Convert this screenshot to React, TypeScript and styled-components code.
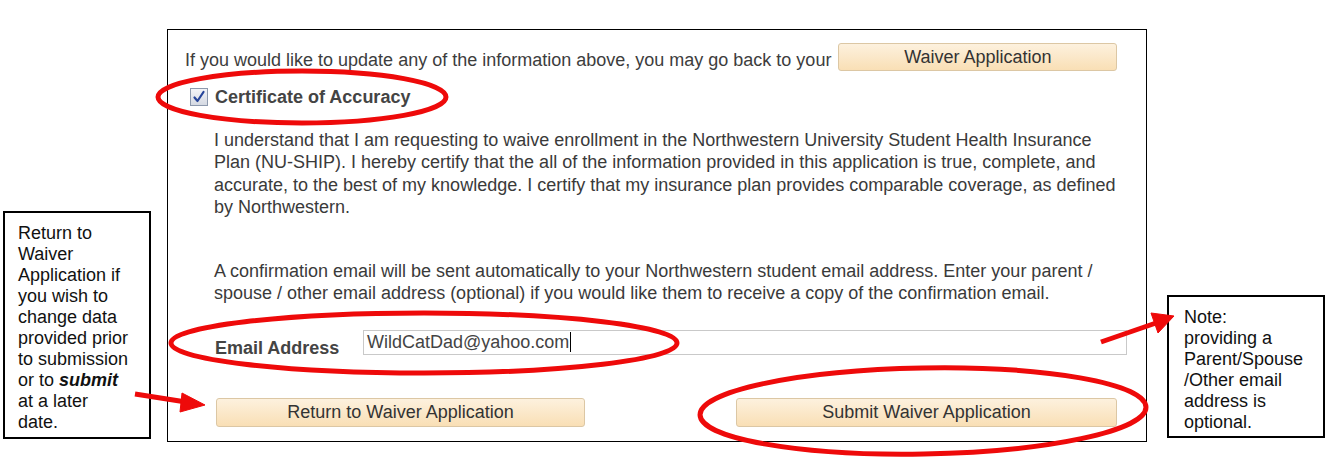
import React from "react";
import styled, { createGlobalStyle } from "styled-components";

const GlobalStyle = createGlobalStyle`
    html, body {
        margin: 0;
        padding: 0;
        background: #ffffff;
    }
    body {
        font-family: "Liberation Sans", Arial, sans-serif;
    }
`;

export default function App() {
    return (
        <>
            <GlobalStyle />
            <Page>
                <Note $top={211} $left={3} $width={148} $height={228} $pad={13}>
                    Return to<br />Waiver<br />Application if<br />you wish to<br />change data<br />
                    provided prior<br />to submission<br />or to <b><i>submit</i></b><br />at a later<br />date.
                </Note>

                <MainBox>
                    <TopRow>
                        <Text>If you would like to update any of the information above, you may go back to your</Text>
                        <Button $width={279} $height={28} $ml={7}>Waiver Application</Button>
                    </TopRow>

                    <CheckRow>
                        <CheckBox>
                            <svg width="14" height="14" viewBox="0 0 14 14">
                                <path d="M2.5 7.5 L5.5 11 L11.5 2" fill="none" stroke="#27459a" strokeWidth="2.2" strokeLinecap="round" strokeLinejoin="round" />
                            </svg>
                        </CheckBox>
                        <Label>Certificate of Accuracy</Label>
                    </CheckRow>

                    <Paragraph $mt={21}>
                        I understand that I am requesting to waive enrollment in the Northwestern University Student Health Insurance
                        Plan (NU-SHIP). I hereby certify that the all of the information provided in this application is true, complete, and
                        accurate, to the best of my knowledge. I certify that my insurance plan provides comparable coverage, as defined
                        by Northwestern.
                    </Paragraph>

                    <Paragraph $mt={42}>
                        A confirmation email will be sent automatically to your Northwestern student email address. Enter your parent /
                        spouse / other email address (optional) if you would like them to receive a copy of the confirmation email.
                    </Paragraph>

                    <EmailRow>
                        <Label $width={148}>Email Address</Label>
                        <Field>
                            WildCatDad@yahoo.com<Caret />
                        </Field>
                    </EmailRow>

                    <ButtonRow>
                        <Button $width={369} $height={29} $ml={31}>Return to Waiver Application</Button>
                        <Button $width={381} $height={29} $ml={151}>Submit Waiver Application</Button>
                    </ButtonRow>
                </MainBox>

                <Note $top={295} $left={20} $width={158} $height={143} $pad={15}>
                    Note:<br />providing a<br />Parent/Spouse<br />/Other email<br />address is<br />optional.
                </Note>

                {/* red marker annotations drawn over the form */}
                <Marks width="1326" height="459" viewBox="0 0 1326 459">
                    <g fill="none" stroke="#ee0a0a" strokeWidth="5">
                        <ellipse cx="302" cy="97" rx="144" ry="26" />
                        <ellipse cx="424" cy="343" rx="253" ry="30" />
                        <ellipse cx="923" cy="411" rx="223" ry="43" transform="rotate(-1 923 411)" />
                    </g>
                    <g fill="#ee0a0a" stroke="#ee0a0a">
                        <line x1="135" y1="394" x2="186" y2="402" strokeWidth="5" />
                        <polygon points="205,405 182,393 180,412" />
                        <line x1="1101" y1="342" x2="1156" y2="323" strokeWidth="5" />
                        <polygon points="1174,316 1151,313 1158,333" />
                    </g>
                </Marks>
            </Page>
        </>
    );
}

const Page = styled.div`
    position: relative;
    display: flex;
    align-items: flex-start;
    width: 1326px;
    height: 459px;
    overflow: hidden;
`;

const Note = styled.div<{ $top: number; $left: number; $width: number; $height: number; $pad: number }>`
    box-sizing: border-box;
    flex: none;
    margin-top: ${(p) => p.$top}px;
    margin-left: ${(p) => p.$left}px;
    width: ${(p) => p.$width}px;
    height: ${(p) => p.$height}px;
    padding: 10px 0 0 ${(p) => p.$pad}px;
    border: 2px solid #000;
    font-size: 18px;
    line-height: 21px;
    color: #111;
`;

const MainBox = styled.div`
    box-sizing: border-box;
    flex: none;
    margin: 29px 0 0 16px;
    width: 980px;
    height: 413px;
    padding: 13px 0 0 17px;
    border: 1px solid #000;
    color: #333;
    font-size: 18px;
`;

const TopRow = styled.div`
    display: flex;
    align-items: flex-end;
`;

const Text = styled.span`
    line-height: 22px;
    color: #3d3d3d;
`;

const Button = styled.div<{ $width: number; $height: number; $ml: number }>`
    box-sizing: border-box;
    display: flex;
    align-items: center;
    justify-content: center;
    flex: none;
    width: ${(p) => p.$width}px;
    height: ${(p) => p.$height}px;
    margin-left: ${(p) => p.$ml}px;
    border: 1px solid #dcc7a4;
    border-radius: 3px;
    background: linear-gradient(#fdf1de, #f9dfb5);
    color: #333;
    font-size: 18px;
`;

const CheckRow = styled.div`
    display: flex;
    align-items: center;
    height: 22px;
    margin-top: 15px;
`;

const CheckBox = styled.span`
    box-sizing: border-box;
    display: flex;
    align-items: center;
    justify-content: center;
    width: 18px;
    height: 18px;
    margin: 0 7px 0 5px;
    border: 1px solid #8d99ad;
    background: linear-gradient(#f3f4f7, #d5d9e2);
`;

const Label = styled.span<{ $width?: number }>`
    flex: none;
    width: ${(p) => (p.$width ? `${p.$width}px` : "auto")};
    font-weight: bold;
    font-size: 18px;
    line-height: 22px;
    color: #444;
`;

const Paragraph = styled.p<{ $mt: number }>`
    margin: ${(p) => p.$mt}px 0 0 29px;
    width: 905px;
    line-height: 22.3px;
    color: #3a3a3a;
`;

const EmailRow = styled.div`
    display: flex;
    align-items: flex-start;
    height: 25px;
    margin: 25px 0 0 30px;

    & > span {
        margin-top: 7px;
    }
`;

const Field = styled.div`
    box-sizing: border-box;
    display: flex;
    align-items: center;
    width: 764px;
    height: 25px;
    padding-left: 3px;
    border: 1px solid #c9c9c9;
    font-size: 18px;
    color: #444;
`;

const Caret = styled.span`
    display: inline-block;
    width: 1px;
    height: 20px;
    margin-left: 1px;
    background: #000;
`;

const ButtonRow = styled.div`
    display: flex;
    margin-top: 43px;
`;

const Marks = styled.svg`
    position: absolute;
    top: 0;
    left: 0;
    pointer-events: none;
`;
